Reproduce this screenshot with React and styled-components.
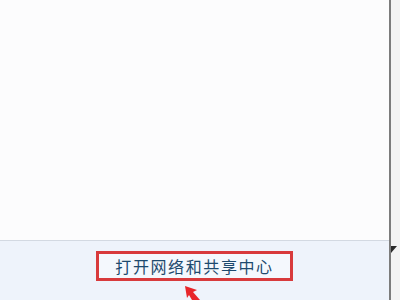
import React from 'react'
import styled, { createGlobalStyle } from 'styled-components'

const Global = createGlobalStyle`
  html, body { margin: 0; padding: 0; }
  body {
    width: 400px;
    height: 300px;
    overflow: hidden;
    background: #fdfdfd;
    font-family: "Microsoft YaHei", "Noto Sans CJK SC", "Noto Sans", sans-serif;
  }
`

const Window = styled.div`
  display: flex;
  width: 400px;
  height: 300px;
`

const Pane = styled.div`
  display: flex;
  flex-direction: column;
  width: 389px;
`

const Content = styled.div`
  height: 240px;
  background: #fcfcfd;
  border-bottom: 1px solid #d3d9e2;
`

const Footer = styled.div`
  position: relative;
  flex: 1;
  display: flex;
  justify-content: center;
  align-items: flex-start;
  padding-top: 10px;
  background: #eef3fb;
`

const Highlight = styled.div`
  display: flex;
  align-items: center;
  justify-content: center;
  box-sizing: border-box;
  width: 197px;
  height: 30px;
  border: 3px solid #d83a3c;
  background: #f4f8fd;
`

const LinkText = styled.span`
  font-size: 16px;
  letter-spacing: 1.6px;
  color: #1d4a6e;
  line-height: 1;
`

const Arrow = styled.svg`
  position: absolute;
  left: 180px;
  top: 43px;
`

const Divider = styled.div`
  width: 2px;
  background: #7c7c7c;
`

const Side = styled.div`
  position: relative;
  flex: 1;
  background: #f3f3f3;
`

const Grip = styled.svg`
  position: absolute;
  left: 0;
  top: 246px;
`

const App = () => {
  return (
    <Window>
      <Global />
      <Pane>
        <Content />
        <Footer>
          <Highlight>
            <LinkText>打开网络和共享中心</LinkText>
          </Highlight>
          <Arrow width="24" height="16" viewBox="0 0 24 16">
            <path d="M5 2 L17 6 L13 8 L20 16 L12 16 L9 11 L7 14 Z" fill="#e8262a" />
          </Arrow>
        </Footer>
      </Pane>
      <Divider />
      <Side>
        <Grip width="6" height="7" viewBox="0 0 6 7">
          <path d="M0 0 L6 0 L0 7 Z" fill="#2a2a2a" />
        </Grip>
      </Side>
    </Window>
  )
}

export default App
